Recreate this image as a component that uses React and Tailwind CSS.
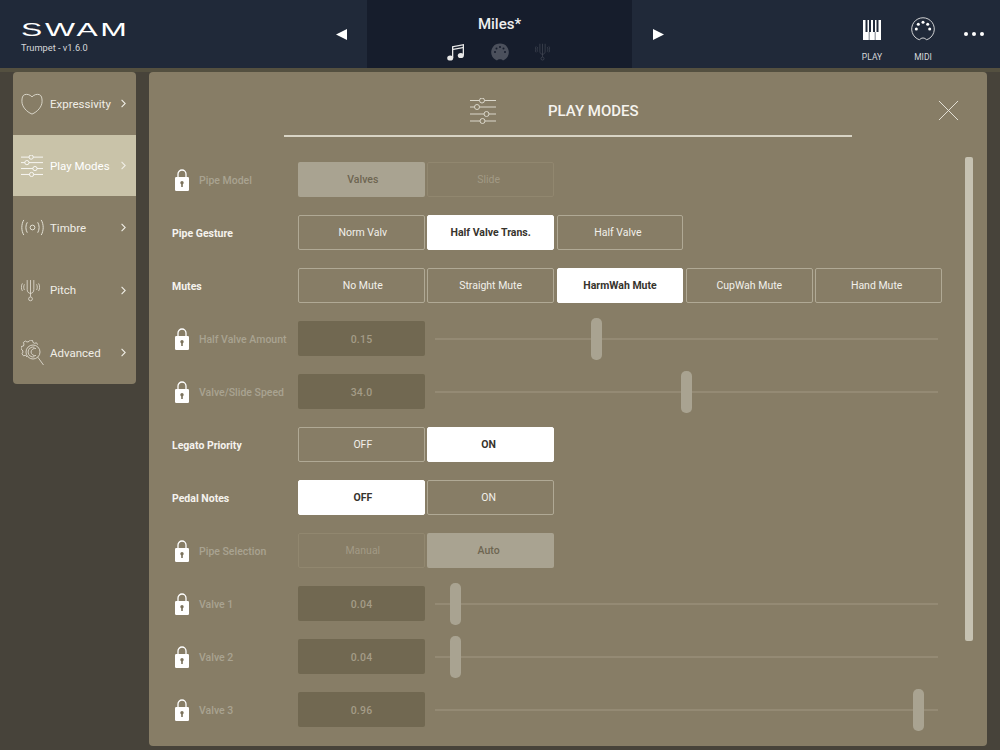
import React from 'react';

const SlidersIcon = ({ className }) => (
  <svg viewBox="0 0 26 26" className={className} fill="none" stroke="currentColor" strokeWidth="1">
    <path d="M0 2.500h9.500M14.500 2.500H26M0 9h4.500M9.500 9H26M0 16h14M19 16h7M0 23h10M15 23h11" />
    <circle cx="12" cy="2.500" r="2.500" />
    <circle cx="7" cy="9" r="2.500" />
    <circle cx="16.500" cy="16" r="2.500" />
    <circle cx="12.500" cy="23" r="2.500" />
  </svg>
);

const HeartIcon = ({ className }) => (
  <svg viewBox="0 0 24 24" className={className} fill="none" stroke="currentColor" strokeWidth="0.9">
    <path d="M12 4.200C9.500 1.600 6.500 1 4 1.800 1.600 2.600 1 5.500 1 9c0 6 5 11.500 11 14 6-2.500 11-8 11-14 0-3.500-.6-6.400-3-7.200-2.500-.8-5.500-.2-8 2.400z" />
  </svg>
);

const WavesIcon = ({ className }) => (
  <svg viewBox="0 0 24 18" className={className} fill="none" stroke="currentColor" strokeWidth="1">
    <circle cx="12" cy="9" r="2.500" />
    <path d="M6.500 3.500C4.500 6.500 4.500 11.500 6.500 14.500M17.500 3.500C19.500 6.500 19.500 11.500 17.500 14.500M2.800 1C0 5.500 0 12.500 2.800 17M21.200 1C24 5.500 24 12.500 21.200 17" />
  </svg>
);

const ForkIcon = ({ className }) => (
  <svg viewBox="0 0 20 24" className={className} fill="none" stroke="currentColor" strokeWidth="0.8">
    <path d="M6.500 1v10c0 2.500 1.500 4 3.500 4s3.500-1.500 3.500-4V1M10 1v17.500" />
    <circle cx="10" cy="20.800" r="2" />
    <path d="M3.600 5.500C2.600 7.500 2.600 9.500 3.600 11.500M1.500 4.500C0 7 0 10 1.500 12.500M16.400 5.500C17.400 7.500 17.400 9.500 16.400 11.500M18.500 4.500C20 7 20 10 18.500 12.500" />
  </svg>
);

const GearIcon = ({ className }) => (
  <svg viewBox="0 0 23 25" className={className} fill="none" stroke="currentColor" strokeWidth="0.8" strokeLinejoin="round">
    <path d="M6 17L4.500 15.300 2.500 15.800 1 13.800 2 12 1.300 10 0 9 .2 6.500 2.500 6 3 4 2.300 2.500 4.300 1 6 2 8 1.500 9.300 0 11.500 .5 12 2.500 13.500 3.300 15.500 2.800 16.700 4.700" />
    <circle cx="12" cy="12" r="7" />
    <path d="M13.500 7.200a5 5 0 1 0 0 9.600M15 8.500a4 4 0 0 0-5 3.500 4 4 0 0 0 5 3.500M16.800 17.200L22.500 25" />
  </svg>
);

const LockIcon = () => (
  <svg viewBox="0 0 14 22" className="h-[22px] w-[14px] text-white">
    <path d="M3 9V5a4 4 0 0 1 8 0v4" fill="none" stroke="currentColor" strokeWidth="1.300" />
    <rect x="0" y="8" width="14" height="14" rx="1.200" fill="currentColor" />
    <circle cx="7" cy="13.800" r="1.700" fill="#7b725c" />
    <rect x="6.200" y="14" width="1.600" height="4" fill="#7b725c" />
  </svg>
);

const Chevron = () => (
  <svg viewBox="0 0 6 10" className="h-[9px] w-[5px] text-[#f0eee6]" fill="none" stroke="currentColor" strokeWidth="1.300">
    <path d="M.7.7L5 5 .7 9.300" />
  </svg>
);

const MidiOutline = () => (
  <svg viewBox="0 0 24 24" className="h-[24px] w-[24px] text-[#e4e4e4]">
    <path d="M8.500 22.800A11.300 11.300 0 1 1 15.500 22.800C14.800 21.800 13.500 21 12 21s-2.800.8-3.500 1.800z" fill="none" stroke="currentColor" strokeWidth="0.9" />
    <g fill="#fff">
      <circle cx="12" cy="5.300" r="1.500" />
      <circle cx="7.300" cy="7.300" r="1.500" />
      <circle cx="16.700" cy="7.300" r="1.500" />
      <circle cx="5.300" cy="12" r="1.500" />
      <circle cx="18.700" cy="12" r="1.500" />
    </g>
  </svg>
);

const MidiFilled = () => (
  <svg viewBox="0 0 18 18" className="h-[18px] w-[18px]">
    <path d="M6 17.500A8.800 8.800 0 1 1 12 17.500C11.500 16.700 10.300 16.200 9 16.200s-2.500.5-3 1.300z" fill="#4b505c" />
    <g fill="#161d2c">
      <circle cx="9" cy="4" r="1" />
      <circle cx="5.500" cy="5.500" r="1" />
      <circle cx="12.500" cy="5.500" r="1" />
      <circle cx="4" cy="9" r="1" />
      <circle cx="14" cy="9" r="1" />
    </g>
  </svg>
);

const NoteIcon = () => (
  <svg viewBox="0 0 18 18" className="h-[18px] w-[18px] text-[#e8e8e8]" fill="currentColor">
    <ellipse cx="3.200" cy="15" rx="3" ry="2.600" />
    <ellipse cx="13.800" cy="12.500" rx="3" ry="2.600" />
    <path d="M5 15V3.200L17 1v11.500h-1.300V5.200L6.300 7V15zM6.300 4.300v1.500l9.400-1.800V2.500z" />
  </svg>
);

const PianoIcon = () => (
  <svg viewBox="0 0 18 20" className="h-[20px] w-[18px]">
    <rect width="18" height="20" fill="#fff" />
    <g fill="#202939">
      <rect x="2.500" y="0" width="2" height="12" />
      <rect x="6" y="0" width="2" height="12" />
      <rect x="10" y="0" width="2" height="12" />
      <rect x="13.500" y="0" width="2" height="12" />
      <rect x="5.800" y="12" width=".6" height="8" />
      <rect x="11.800" y="12" width=".6" height="8" />
    </g>
  </svg>
);

const menuItems = [
  { label: 'Expressivity', Icon: HeartIcon, size: 'h-[22px] w-[22px]', h: 'h-[63px]' },
  { label: 'Play Modes', Icon: SlidersIcon, size: 'h-[22px] w-[22px]', h: 'h-[61px]', active: true },
  { label: 'Timbre', Icon: WavesIcon, size: 'h-[17px] w-[23px]', h: 'h-[63px]' },
  { label: 'Pitch', Icon: ForkIcon, size: 'h-[23px] w-[19px]', h: 'h-[62px]' },
  { label: 'Advanced', Icon: GearIcon, size: 'h-[25px] w-[23px]', h: 'h-[63px]' },
];

const Sidebar = () => (
  <div className="w-[123px] h-[312px] shrink-0 rounded-[4px] bg-[#877d66] overflow-hidden">
    {menuItems.map(({ label, Icon, size, h, active }) => (
      <div
        key={label}
        className={`${h} flex items-center pl-[8px] pr-[10px] ${active ? 'bg-[#c9c3a9]' : ''}`}
      >
        <div className="w-[29px] shrink-0 flex justify-start">
          <Icon className={`${size} ${active ? 'text-white' : 'text-[#e8e5da]'}`} />
        </div>
        <span className={`flex-1 pt-[2px] text-[11.5px] ${active ? 'text-white' : 'text-[#f0eee6]'}`}>{label}</span>
        <Chevron />
      </div>
    ))}
  </div>
);

const Btn = ({ children, state, first, last }) => {
  const styles = {
    normal: 'border-[1.5px] border-[#b0a995] text-[#f2f0ea]',
    selected: 'bg-white border-[1.5px] border-white text-[#37342d] font-bold',
    lockedOn: 'bg-[#a9a391] text-[#6e6651] font-medium',
    lockedOff: 'border border-[#91876f] text-[#a29a85]',
  };
  return (
    <div className={`w-[126.6px] h-full rounded-[2px] pt-[1px] flex items-center justify-center text-[10.5px] ${first ? 'pl-[3px]' : ''} ${last ? 'pr-[4px]' : ''} ${styles[state]}`}>
      {children}
    </div>
  );
};

const Label = ({ children, locked }) =>
  locked ? (
    <div className="w-[126px] shrink-0 flex items-center pl-[3px] gap-[10px]">
      <LockIcon />
      <span className="pt-[2px] text-[10.5px] font-medium text-[#a9a391] whitespace-nowrap">{children}</span>
    </div>
  ) : (
    <div className="w-[126px] shrink-0 pt-[2px] text-[10.5px] font-bold text-[#f5f3ee]">{children}</div>
  );

const ChoiceRow = ({ label, locked, options }) => (
  <div className="h-[35px] flex items-center">
    <Label locked={locked}>{label}</Label>
    <div className="flex gap-[2.75px] h-full">
      {options.map(([text, state], i) => (
        <Btn key={text} state={state} first={i === 0} last={i === options.length - 1}>{text}</Btn>
      ))}
    </div>
  </div>
);

const SliderRow = ({ label, value, thumb }) => (
  <div className="h-[35px] flex items-center">
    <Label locked>{label}</Label>
    <div className="w-[127px] h-full shrink-0 rounded-[2px] pt-[2px] bg-[#716851] text-[#a49c87] text-[10.5px] font-medium flex items-center justify-center tracking-[0.2px]">
      {value}
    </div>
    <div className="relative ml-[10px] w-[503px] h-[2px] bg-[#948a74]">
      <div className={`absolute top-[-20px] w-[11px] h-[42px] rounded-[5px] bg-[#a9a391] ${thumb}`} />
    </div>
  </div>
);

const Panel = () => (
  <div className="relative w-[838px] h-[674px] shrink-0 rounded-[4px] bg-[#877d66] overflow-hidden">
    <div className="relative mx-[135px] w-[568px] h-[65px] border-b-2 border-[#d8d4c5] flex items-center pt-[14px]">
      <SlidersIcon className="ml-[186px] h-[26px] w-[26px] text-[#dad7ca]" />
      <span className="ml-[52px] pt-[2px] text-[15px] font-medium text-[#f5f3ee]">PLAY MODES</span>
    </div>
    <svg viewBox="0 0 22 22" className="absolute left-[789px] top-[28px] h-[21px] w-[21px] text-[#e8e5da]" fill="none" stroke="currentColor" strokeWidth="1">
      <path d="M1 1l20 20M21 1L1 21" />
    </svg>
    <div className="absolute left-[816px] top-[85px] h-[484px] w-[8px] rounded-[2px] bg-[#c6c2b2]" />
    <div className="mt-[25px] ml-[23px] flex flex-col gap-[18px]">
      <ChoiceRow label="Pipe Model" locked options={[['Valves', 'lockedOn'], ['Slide', 'lockedOff']]} />
      <ChoiceRow label="Pipe Gesture" options={[['Norm Valv', 'normal'], ['Half Valve Trans.', 'selected'], ['Half Valve', 'normal']]} />
      <ChoiceRow
        label="Mutes"
        options={[['No Mute', 'normal'], ['Straight Mute', 'normal'], ['HarmWah Mute', 'selected'], ['CupWah Mute', 'normal'], ['Hand Mute', 'normal']]}
      />
      <SliderRow label="Half Valve Amount" value="0.15" thumb="left-[156px]" />
      <SliderRow label="Valve/Slide Speed" value="34.0" thumb="left-[246px]" />
      <ChoiceRow label="Legato Priority" options={[['OFF', 'normal'], ['ON', 'selected']]} />
      <ChoiceRow label="Pedal Notes" options={[['OFF', 'selected'], ['ON', 'normal']]} />
      <ChoiceRow label="Pipe Selection" locked options={[['Manual', 'lockedOff'], ['Auto', 'lockedOn']]} />
      <SliderRow label="Valve 1" value="0.04" thumb="left-[15px]" />
      <SliderRow label="Valve 2" value="0.04" thumb="left-[15px]" />
      <SliderRow label="Valve 3" value="0.96" thumb="left-[478px]" />
    </div>
  </div>
);

const Header = () => (
  <div className="h-[72px] border-b-4 border-[#545040] bg-[#202939] flex">
    <div className="w-[292px] shrink-0 pl-[21px] pt-[19px]">
      <div className="origin-left scale-x-[1.77] text-[18px] leading-[22px] tracking-[1.5px] text-white font-['Liberation_Sans']">SWAM</div>
      <div className="text-[9.25px] leading-[14px] text-[#d5d7da]">Trumpet - v1.6.0</div>
    </div>
    <div className="w-[75px] shrink-0 flex items-center justify-center">
      <svg viewBox="0 0 11 11" className="h-[11px] w-[11px] ml-[24px] text-white" fill="currentColor"><path d="M0 5.500L11 0v11z" /></svg>
    </div>
    <div className="w-[265px] shrink-0 bg-[#161d2c] flex flex-col items-center pt-[14px]">
      <div className="text-[15px] leading-[20px] font-medium text-[#eeeeee]">Miles*</div>
      <div className="mt-[9px] flex items-center gap-[26px] ml-[-3px]">
        <NoteIcon />
        <MidiFilled />
        <ForkIcon className="h-[18px] w-[15px] text-[#4b505c]" />
      </div>
    </div>
    <div className="w-[75px] shrink-0 flex items-center justify-center">
      <svg viewBox="0 0 11 11" className="h-[11px] w-[11px] ml-[-23px] text-white" fill="currentColor"><path d="M11 5.500L0 0v11z" /></svg>
    </div>
    <div className="flex-1 flex justify-end pr-[16px]">
      <div className="flex flex-col items-center pt-[20px] w-[40px] mr-[11px]">
        <PianoIcon />
        <span className="mt-[11px] text-[8.500px] leading-[12px] text-[#d5d7da]">PLAY</span>
      </div>
      <div className="flex flex-col items-center pt-[17px] w-[40px] mr-[21px]">
        <MidiOutline />
        <span className="mt-[10px] text-[8.500px] leading-[12px] text-[#d5d7da]">MIDI</span>
      </div>
      <div className="flex items-center gap-[4px] mt-[-1px]">
        <div className="h-[4px] w-[4px] rounded-full bg-white" />
        <div className="h-[4px] w-[4px] rounded-full bg-white" />
        <div className="h-[4px] w-[4px] rounded-full bg-white" />
      </div>
    </div>
  </div>
);

export default function App() {
  return (
    <div className="w-[1000px] h-[750px] overflow-hidden bg-[#47433a] font-['Roboto',sans-serif]">
      <Header />
      <div className="flex gap-[13px] pl-[13px]">
        <Sidebar />
        <Panel />
      </div>
    </div>
  );
}
